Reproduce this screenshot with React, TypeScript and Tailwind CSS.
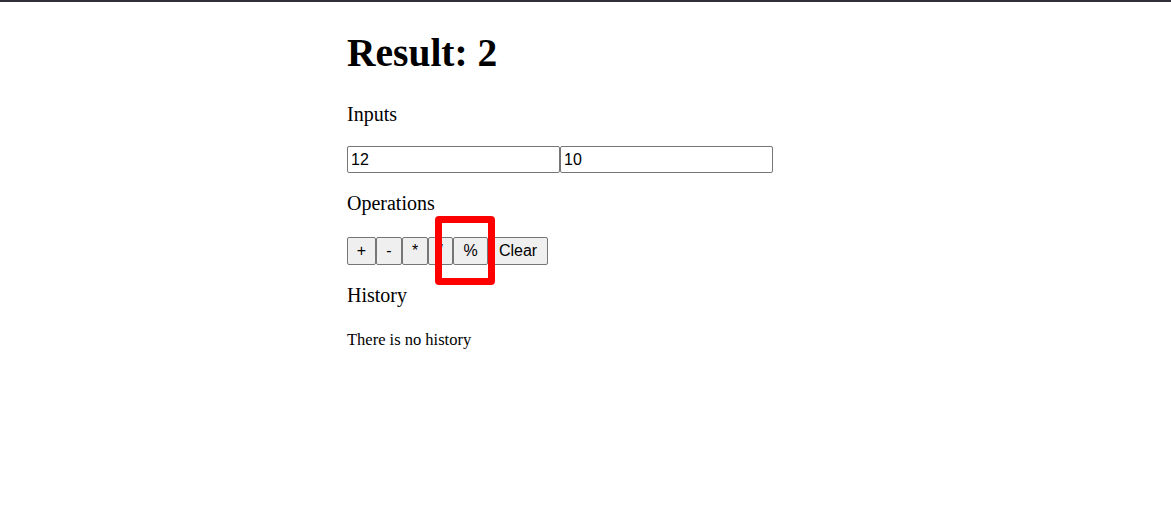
import React from "react";

export default function App() {
  const ops: [string, string][] = [
    ["+", "w-[29px]"],
    ["-", "w-[26px]"],
    ["*", "w-[26px]"],
    ["/", "w-[25px]"],
    ["%", "w-[35px]"],
    ["Clear", "w-[60px]"],
  ];
  return (
    <div className="relative min-h-[518px] w-full bg-white border-t-2 border-[#30303c] text-black" style={{ fontFamily: '"Liberation Serif", "Times New Roman", serif' }}>
      <div className="mx-auto w-[477px] pt-[28px] flex flex-col items-start">
        <h1 className="text-[39.5px] leading-[46px] font-bold">Result: 2</h1>
        <p className="mt-[27px] text-[20px] leading-[23px]">Inputs</p>
        <div className="mt-[20px] flex">
          <input
            defaultValue="12"
            className="w-[213px] h-[27px] border border-[#767676] rounded-[2px] px-[3px] text-[16px] text-black bg-white outline-none"
            style={{ fontFamily: '"Liberation Sans", Arial, sans-serif' }}
          />
          <input
            defaultValue="10"
            className="w-[213px] h-[27px] border border-[#767676] rounded-[2px] px-[3px] text-[16px] text-black bg-white outline-none"
            style={{ fontFamily: '"Liberation Sans", Arial, sans-serif' }}
          />
        </div>
        <p className="mt-[19px] text-[20px] leading-[23px]">Operations</p>
        <div className="mt-[22px] flex">
          {ops.map(([o, w]) => (
            <button
              key={o}
              className={`${w} h-[28px] flex items-center justify-center border border-[#767676] rounded-[2px] bg-[#efefef] text-[16px] leading-[18px] text-black`}
              style={{ fontFamily: '"Liberation Sans", Arial, sans-serif' }}
            >
              {o}
            </button>
          ))}
        </div>
        <p className="mt-[19px] text-[20px] leading-[23px]">History</p>
        <p className="mt-[24px] text-[16.5px] leading-[18px]">There is no history</p>
      </div>
      <div className="absolute left-[435px] top-[214px] w-[60px] h-[69px] border-[7px] border-[#ff0000] rounded-[4px] pointer-events-none" />
    </div>
  );
}
